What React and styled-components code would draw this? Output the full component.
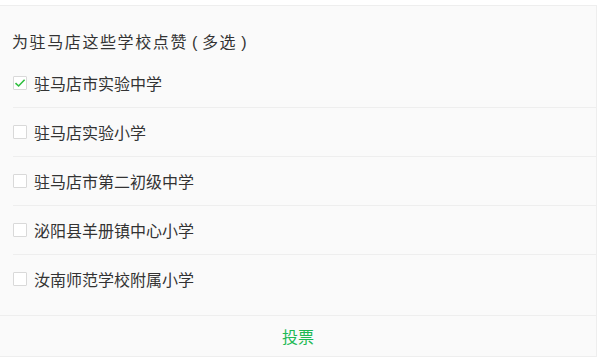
import React, { useState } from "react";
import styled, { createGlobalStyle } from "styled-components";

const GlobalStyle = createGlobalStyle`
  html, body {
    margin: 0;
    padding: 0;
    background: #ffffff;
  }
  body {
    font-family: "Liberation Sans", "Noto Sans CJK SC", sans-serif;
  }
`;

const schools = [
  { id: 1, name: "驻马店市实验中学", checked: true },
  { id: 2, name: "驻马店实验小学", checked: false },
  { id: 3, name: "驻马店市第二初级中学", checked: false },
  { id: 4, name: "泌阳县羊册镇中心小学", checked: false },
  { id: 5, name: "汝南师范学校附属小学", checked: false },
];

const App = () => {
  const [items, setItems] = useState(schools);

  const toggle = (id) => {
    setItems((prev) =>
      prev.map((item) =>
        item.id === id ? { ...item, checked: !item.checked } : item
      )
    );
  };

  return (
    <>
      <GlobalStyle />
      <Card>
        <Title>
          为驻马店这些学校点赞<Paren $before={4} $after={3}>(</Paren>多选
          <Paren $before={4} $after={0}>)</Paren>
        </Title>
        <List>
          {items.map((item) => (
            <Row key={item.id} onClick={() => toggle(item.id)}>
              <Box>
                {item.checked && (
                  <svg width="12" height="10" viewBox="0 0 12 10">
                    <path
                      d="M1.5 5.2 L4.6 8 L10.6 1.8"
                      fill="none"
                      stroke="#2fbf3f"
                      strokeWidth="1.6"
                    />
                  </svg>
                )}
              </Box>
              <Label>{item.name}</Label>
            </Row>
          ))}
        </List>
        <Footer>
          <VoteButton>投票</VoteButton>
        </Footer>
      </Card>
    </>
  );
};

const Card = styled.div`
  margin-top: 5px;
  width: 596px;
  background: #fafafa;
  border: 1px solid #eeeeee;
  border-left: none;
`;

const Title = styled.div`
  padding: 27px 12px 6px;
  font-size: 16px;
  line-height: 20px;
  letter-spacing: 1.6px;
  color: #333333;
`;

const Paren = styled.span`
  margin-left: ${(p) => p.$before}px;
  margin-right: ${(p) => p.$after}px;
`;

const List = styled.div`
  padding-bottom: 12px;
`;

const Row = styled.div`
  display: flex;
  align-items: center;
  gap: 7px;
  height: 48px;
  margin-left: 13px;
  border-bottom: 1px solid #eeeeee;
  cursor: pointer;

  &:last-child {
    border-bottom: none;
  }
`;

const Box = styled.span`
  display: flex;
  align-items: center;
  justify-content: center;
  width: 12px;
  height: 12px;
  border: 1px solid #d9d9d9;
  background: #ffffff;
  border-radius: 1px;
`;

const Label = styled.span`
  font-size: 16px;
  color: #333333;
`;

const Footer = styled.div`
  border-top: 1px solid #eeeeee;
  display: flex;
  justify-content: center;
  align-items: center;
  height: 40px;
`;

const VoteButton = styled.button`
  border: none;
  background: none;
  padding: 0;
  font-family: inherit;
  font-size: 16px;
  color: #1db954;
  cursor: pointer;
`;

export default App;
